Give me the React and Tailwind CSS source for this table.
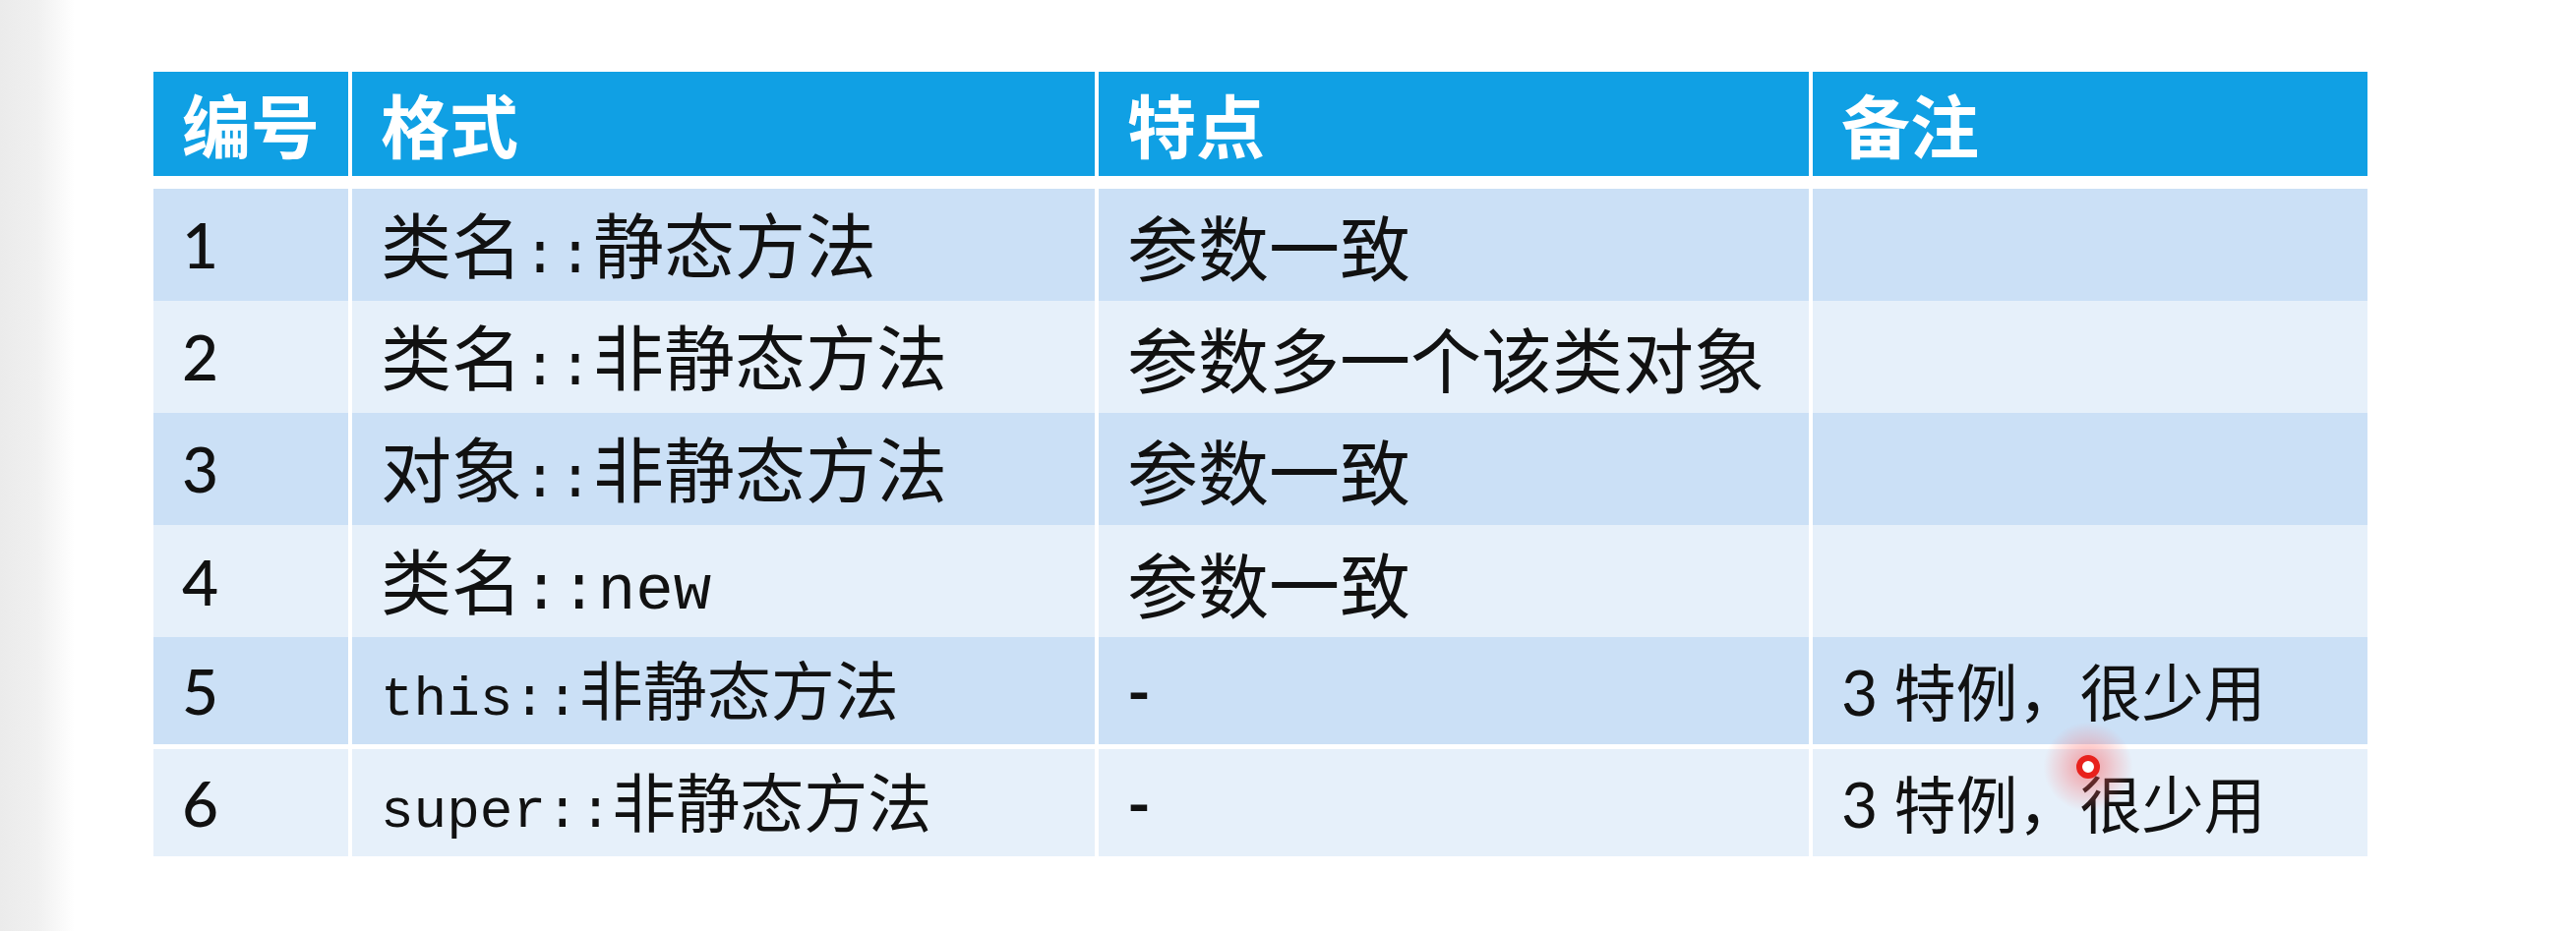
const CJK = "font-['Noto_Sans_CJK_SC',sans-serif]";
const MONO = "font-['Liberation_Mono','Noto_Sans_CJK_SC',monospace]";
const NUM = "font-['Lato','Noto_Sans_CJK_SC',sans-serif]";

const HEADERS = ['编号', '格式', '特点', '备注'];

// part kinds: cjk / sep ("::" between CJK words) / new ("::new") / kw (this::, super::) / cjk2 (CJK after kw)
const ROWS = [
  { no: '1', fmt: [['cjk', '类名'], ['sep', '::'], ['cjk', '静态方法']], feat: '参数一致', note: false },
  { no: '2', fmt: [['cjk', '类名'], ['sep', '::'], ['cjk', '非静态方法']], feat: '参数多一个该类对象', note: false },
  { no: '3', fmt: [['cjk', '对象'], ['sep', '::'], ['cjk', '非静态方法']], feat: '参数一致', note: false },
  { no: '4', fmt: [['cjk', '类名'], ['new', '::new']], feat: '参数一致', note: false },
  { no: '5', fmt: [['kw', 'this::'], ['cjk2', '非静态方法']], feat: '-', note: true },
  { no: '6', fmt: [['kw', 'super::'], ['cjk2', '非静态方法']], feat: '-', note: true },
];

const PART_CLASS = {
  cjk: `${CJK} text-[72px]`,
  cjk2: `${CJK} text-[65px]`,
  sep: `${MONO} text-[60px]`,
  new: `${MONO} text-[64px]`,
  kw: `${MONO} text-[56px]`,
};

function FormatCell({ parts }) {
  return (
    <span className="whitespace-nowrap">
      {parts.map(([kind, text], i) => (
        <span key={i} className={PART_CLASS[kind]}>
          {text}
        </span>
      ))}
    </span>
  );
}

function Cell({ children, className = '' }) {
  return (
    <div className={`flex items-center px-[29px] text-[#111] ${className}`}>{children}</div>
  );
}

export default function App() {
  return (
    <div className="flex h-[947px] w-[2619px] overflow-hidden bg-white">
      <div className="w-[76px] shrink-0 bg-gradient-to-r from-[#ebebeb] via-[#f0f0f0] to-white" />

      <div className="relative ml-[80px] mt-[73px]">
        <div className="grid grid-cols-[198px_755px_722px_564px] gap-x-[4px]">
          {HEADERS.map((h) => (
            <div
              key={h}
              className={`flex h-[106px] items-center bg-[#10a0e4] px-[29px] ${CJK} text-[70px] font-bold leading-none text-white`}
            >
              {h}
            </div>
          ))}
        </div>

        <div className="mt-[13px] flex flex-col gap-y-[5px]">
          {ROWS.map((r, i) => {
            const bg = i % 2 === 0 ? 'bg-[#cbe0f6]' : 'bg-[#e6f0fa]';
            return (
              <div key={r.no} className="grid h-[109px] grid-cols-[198px_755px_722px_564px] gap-x-[4px]">
                <Cell className={`${bg} ${NUM} text-[64px] font-medium`}>{r.no}</Cell>
                <Cell className={bg}>
                  <FormatCell parts={r.fmt} />
                </Cell>
                <Cell className={bg}>
                  {r.feat === '-' ? (
                    <span className={`${NUM} text-[64px] font-bold`}>-</span>
                  ) : (
                    <span className={`${CJK} text-[72px]`}>{r.feat}</span>
                  )}
                </Cell>
                <Cell className={bg}>
                  {r.note && (
                    <span className="whitespace-nowrap">
                      <span className={`${NUM} text-[64px]`}>3 </span>
                      <span className={`${CJK} text-[63px]`}>特例，很少用</span>
                    </span>
                  )}
                </Cell>
              </div>
            );
          })}
        </div>

        {/* pointer highlight */}
        <div className="absolute left-[1921px] top-[661px] flex h-[92px] w-[92px] items-center justify-center rounded-full bg-[radial-gradient(circle,rgba(255,70,70,0.5)_0%,rgba(255,110,110,0.22)_45%,transparent_70%)]">
          <div className="h-[24px] w-[24px] rounded-full border-[6px] border-[#e8211c] bg-white" />
        </div>
      </div>
    </div>
  );
}
